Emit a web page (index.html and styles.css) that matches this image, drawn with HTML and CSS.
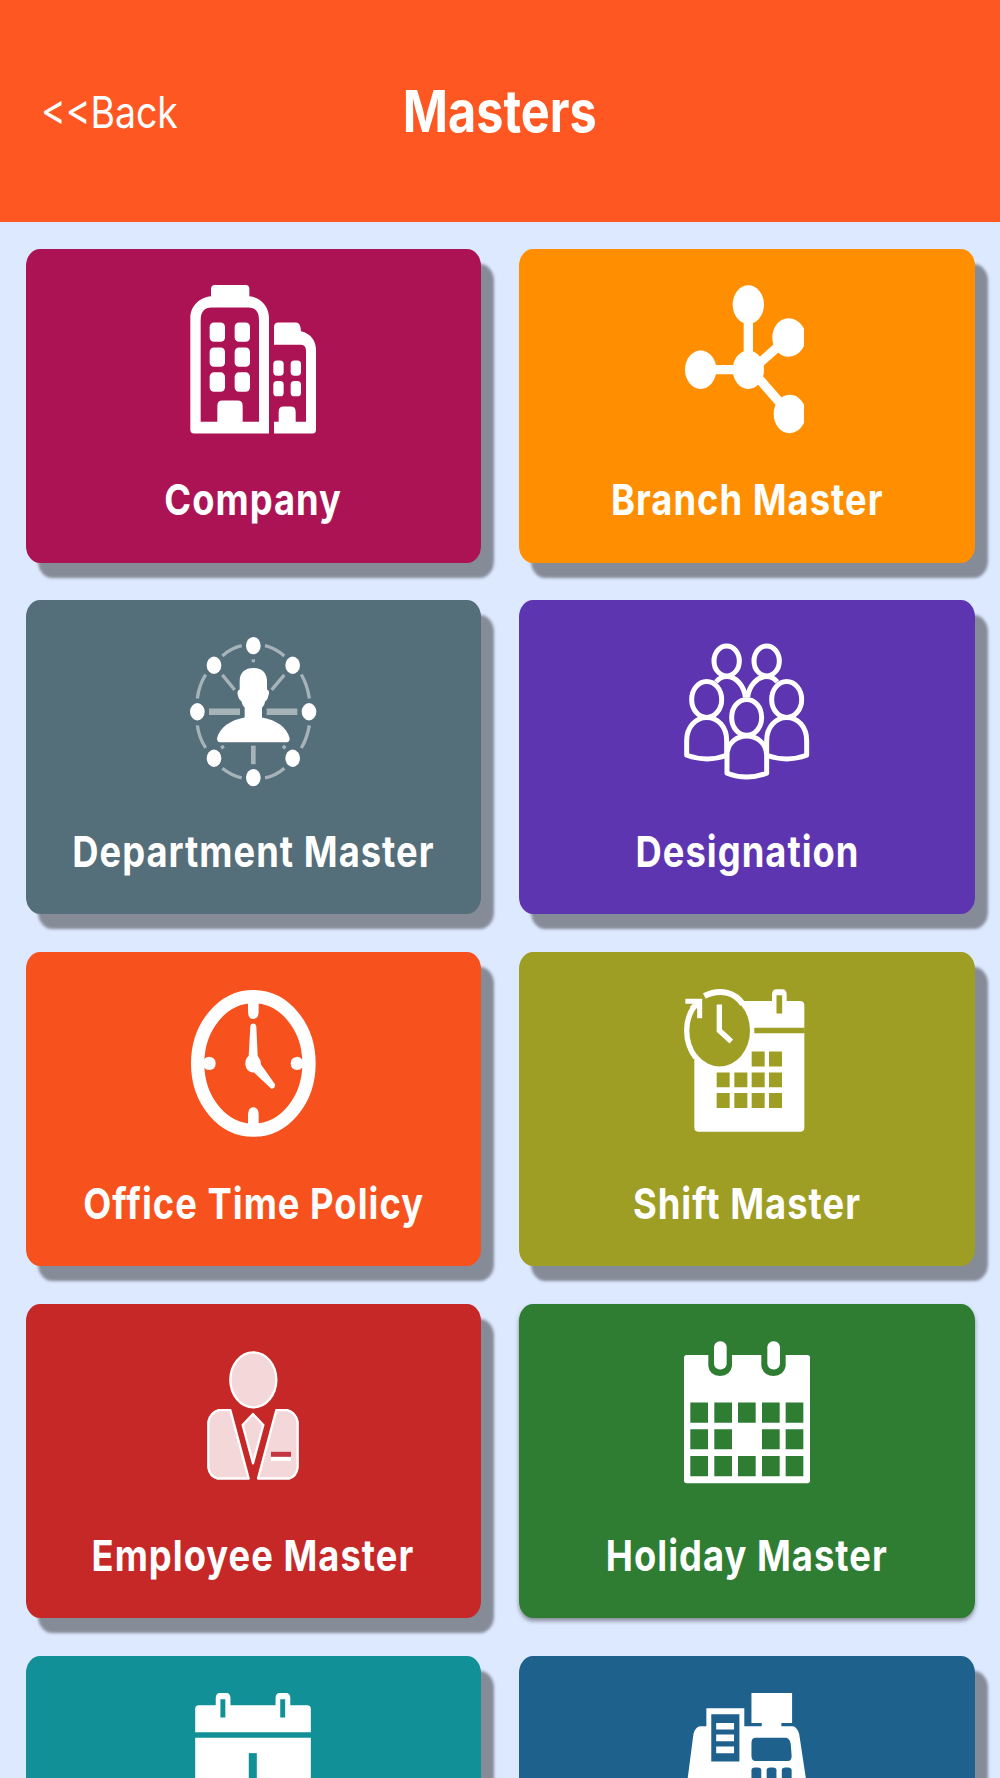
FILE: index.html
```html
<!DOCTYPE html>
<html lang="en">
<head>
<meta charset="utf-8">
<title>Masters</title>
<link rel="stylesheet" href="styles.css">
</head>
<body>
<div class="screen">
<header class="header">
  <a class="back">&lt;&lt;Back</a>
  <h1 class="title">Masters</h1>
</header>
<main class="grid">
  <section class="card company">
    <svg class="icon" viewBox="60 74 378 447" preserveAspectRatio="none">
      <path fill="#fff" fill-rule="evenodd" d="M123 108V86Q123 74 135 74H227Q238 74 238 86V108C272 111 297 139 297 173V521H72Q61 521 61 510V173C61 139 88 111 123 108ZM92 180V486H142V438Q142 422 157 422H203Q218 422 218 438V486H267V180Q267 142 235 142H125Q92 142 92 180Z"/>
      <g fill="#fff"><rect x="119" y="187" width="46" height="58" rx="13"/><rect x="194" y="187" width="46" height="58" rx="13"/><rect x="119" y="262" width="46" height="58" rx="13"/><rect x="194" y="262" width="46" height="58" rx="13"/><rect x="119" y="337" width="46" height="58" rx="13"/><rect x="194" y="337" width="46" height="58" rx="13"/>
      <path d="M312 254V201Q312 187 325 187H378Q392 187 393 213C423 220 438 242 438 271V510Q438 521 428 521H312V486H326V456Q326 440 340 440H363Q377 440 377 456V486H408V272Q408 254 391 254Z"/>
      <rect x="310" y="301" width="31" height="46" rx="11"/><rect x="362" y="301" width="31" height="46" rx="11"/><rect x="310" y="363" width="31" height="46" rx="11"/><rect x="362" y="363" width="31" height="46" rx="11"/></g>
    </svg>
    <h2 class="label">Company</h2>
  </section>
  <section class="card branch">
    <svg class="icon" viewBox="72 74 378 447" preserveAspectRatio="none">
      <path d="M265 133V329M123 329H265" fill="none" stroke="#fff" stroke-width="28"/>
      <path d="M265 339L385 232M265 319L389 462" fill="none" stroke="#fff" stroke-width="28"/>
      <g fill="#fff"><ellipse cx="265" cy="133" rx="47" ry="58"/><ellipse cx="122" cy="329" rx="47" ry="58"/><ellipse cx="265" cy="329" rx="47" ry="58"/><path d="M432 205C423 187 406 174 385 174C358 174 337 200 337 232S358 290 385 290C405 290 423 277 432 257ZM432 434C423 416 409 404 389 404C362 404 341 430 341 462S362 520 389 520C409 520 423 507 432 489Z"/></g>
    </svg>
    <h2 class="label">Branch Master</h2>
  </section>
  <section class="card department">
    <svg class="icon" viewBox="60 49 378 447" preserveAspectRatio="none">
      <g fill="none" stroke="#a6b3b9" stroke-width="10">
        <path d="M157 106Q184 82 215 75M285 75Q317 83 343 106M394 162Q412 193 418 234M418 315Q412 352 394 383M343 444Q317 467 285 473M215 473Q184 466 157 444M107 383Q87 352 82 315M82 234Q87 193 107 162"/>
        <path d="M157 163L194 208M343 163L305 208M250 116V125M153 383L162 378M338 378L347 383"/>
        <path d="M250 376V432" stroke-width="14"/>
        <path d="M117 274H210M290 274H382" stroke-width="20"/>
      </g>
      <g fill="#fff"><ellipse cx="250" cy="75" rx="22" ry="26"/><ellipse cx="368" cy="134" rx="22" ry="26"/><ellipse cx="417" cy="274" rx="22" ry="26"/><ellipse cx="368" cy="414" rx="22" ry="26"/><ellipse cx="250" cy="472" rx="22" ry="26"/><ellipse cx="132" cy="414" rx="22" ry="26"/><ellipse cx="82" cy="274" rx="22" ry="26"/><ellipse cx="132" cy="134" rx="22" ry="26"/>
      <path d="M250 142C276 142 290 156 291 180V207Q301 210 295 226Q292 240 286 242Q284 254 276 262V291C320 299 352 321 359 354Q359 366 350 366H150Q141 366 141 354C149 321 180 299 224 291V262Q216 254 214 242Q207 239 204 226Q199 210 209 207V180C210 156 224 142 250 142Z"/></g>
    </svg>
    <h2 class="label">Department Master</h2>
  </section>
  <section class="card designation">
    <svg class="icon" viewBox="72 49 378 447" preserveAspectRatio="none">
      <g fill="none" stroke="#fff" stroke-width="15" stroke-linejoin="round">
        <ellipse cx="200" cy="121" rx="38" ry="45"/><ellipse cx="320" cy="121" rx="38" ry="45"/>
        <path d="M168 184Q182 168 200 168C228 168 252 195 256 230M352 184Q338 168 320 168C292 168 267 195 263 230"/>
        <ellipse cx="140" cy="237" rx="45" ry="54"/><ellipse cx="380" cy="237" rx="45" ry="54"/>
        <path d="M80 405V360C80 322 106 291 140 291C176 291 200 322 200 360V405Q143 427 80 405ZM320 405V360C320 322 346 291 380 291C416 291 440 322 440 360V405Q380 427 320 405Z"/>
      </g>
      <g fill="#5e35b1" stroke="#fff" stroke-width="15" stroke-linejoin="round"><path d="M201 459V405C201 370 229 347 260 347S320 370 320 405V459Q260 482 201 459Z"/><ellipse cx="260" cy="291" rx="45" ry="54"/></g>
    </svg>
    <h2 class="label">Designation</h2>
  </section>
  <section class="card office">
    <svg class="icon" viewBox="60 55 378 447" preserveAspectRatio="none">
      <ellipse cx="250" cy="279" rx="167" ry="201" fill="none" stroke="#fff" stroke-width="40"/>
      <g fill="#fff"><path d="M234 90H266V126Q265 145 250 145T234 126ZM234 465H266V433Q265 411 250 411T234 433ZM90 267H103Q107 259 118 259Q137 261 137 279T118 299Q107 299 103 292H90ZM410 267H396Q392 259 382 259Q362 261 362 279T382 299Q392 299 396 292H410Z"/>
      <path d="M241 168Q242 159 250 159T259 168L263 256Q272 266 273 282L315 342Q316 355 304 355L252 306C237 307 226 295 226 279Q226 264 236 257Z"/></g>
    </svg>
    <h2 class="label">Office Time Policy</h2>
  </section>
  <section class="card shift">
    <svg class="icon" viewBox="72 55 378 447" preserveAspectRatio="none">
      <path fill="#fff" d="M235 91H336V72Q336 56 350 56H366Q380 56 380 72V91H420Q433 91 433 104V472Q433 485 420 485H117Q103 485 103 472V260Z"/>
      <ellipse cx="179" cy="180" rx="91" ry="108" fill="#9e9d24"/>
      <g fill="none"><path d="M133 76C184 50 228 69 249 101" stroke="#fff" stroke-width="18"/><path d="M105 104C72 146 71 214 107 262" stroke="#fff" stroke-width="16"/>
      <path d="M76 92H119V143" stroke="#fff" stroke-width="15"/><path d="M95 115L119 94" stroke="#fff" stroke-width="17"/>
      <path d="M178 102V180L214 213" stroke="#fff" stroke-width="16"/>
      <path d="M283 180H434M358 74V129" stroke="#9e9d24" stroke-width="17"/></g>
      <path fill="#9e9d24" d="M275 243h39v45h-39zM327 243h39v45h-39zM170 306h39v45h-39zM223 306h39v45h-39zM275 306h39v45h-39zM327 306h39v45h-39zM170 368h39v45h-39zM223 368h39v45h-39zM275 368h39v45h-39zM327 368h39v45h-39z"/>
    </svg>
    <h2 class="label">Shift Master</h2>
  </section>
  <section class="card employee">
    <svg class="icon" viewBox="60 30 378 447" preserveAspectRatio="none">
      <g fill="#f4d7d8" stroke="#fff" stroke-width="7" stroke-linejoin="round">
        <ellipse cx="250" cy="147" rx="69" ry="83"/>
        <path d="M146 238H181L236 444H143Q119 438 115 411V273Q121 245 146 238ZM319 238H352Q377 245 383 273V411Q379 438 357 444H264Z"/>
        <path d="M249 250L280 283L249 398L218 283Z"/>
      </g>
      <path d="M303 385H363" stroke="#fff" stroke-width="12"/><path d="M303 371H363" stroke="#c33742" stroke-width="15"/>
    </svg>
    <h2 class="label">Employee Master</h2>
  </section>
  <section class="card holiday">
    <svg class="icon" viewBox="72 61 378 447" preserveAspectRatio="none">
      <rect x="72" y="103" width="378" height="386" rx="8" fill="#fff"/>
      <path fill="#2e7d32" d="M145 98H216V137Q211 166 180 166T145 137ZM304 98H377V137Q371 166 341 166T304 137Z"/>
      <g fill="#fff"><rect x="162" y="62" width="38" height="85" rx="18"/><rect x="322" y="62" width="38" height="85" rx="18"/></g>
      <path fill="#2e7d32" d="M91 246h53v61h-53zM163 246h53v61h-53zM234 246h53v61h-53zM306 246h53v61h-53zM377 246h53v61h-53zM91 327h53v60h-53zM163 327h53v60h-53zM306 327h53v60h-53zM377 327h53v60h-53zM91 407h53v61h-53zM163 407h53v61h-53zM234 407h53v61h-53zM306 407h53v61h-53zM377 407h53v61h-53z"/>
    </svg>
    <h2 class="label">Holiday Master</h2>
  </section>
  <section class="card schedule">
    <svg class="icon" viewBox="121 156 378 447" preserveAspectRatio="none">
      <g transform="scale(1.3393 1)">
        <path fill="#fff" d="M102 274V204Q102 193 110 193H148V170Q149 156 157 156H172Q180 156 181 170V193H282V170Q283 156 291 156H306Q314 156 315 170V193H353Q361 193 361 204V274ZM102 291H361V590H102Z"/>
        <path d="M164 175V230M298 175V230" stroke="#129097" stroke-width="11"/><path d="M231 337V480" stroke="#129097" stroke-width="18"/>
      </g>
    </svg>
  </section>
  <section class="card register">
    <svg class="icon" viewBox="1603 156 378 447" preserveAspectRatio="none">
      <g transform="scale(1.3393 1)">
        <path fill="#fff" d="M1348 156H1439V246H1415V256H1440Q1450 257 1455 280L1470 414V590H1205V414L1218 280Q1222 257 1234 256H1247V202H1332V256H1371V246H1348Z"/>
        <path fill="#1f618d" d="M1258 220H1321V362H1258ZM1356 291H1426Q1434 293 1436 310L1438 346Q1438 361 1430 361H1356Q1348 359 1348 344V308Q1348 292 1356 291Z"/>
        <path d="M1269 256H1309M1269 291H1309M1269 327H1309" stroke="#fff" stroke-width="20"/>
        <g fill="#1f618d"><rect x="1348" y="380" width="22" height="50" rx="8"/><rect x="1382" y="380" width="22" height="50" rx="8"/><rect x="1416" y="380" width="22" height="50" rx="8"/></g>
      </g>
    </svg>
  </section>
</main>
</div>
</body>
</html>
```
FILE: styles.css
```css
* { box-sizing: border-box; }
body { margin: 0; font-family: Inter, "Liberation Sans", sans-serif; color: #fff; }
.screen { height: 1778px; overflow: hidden; background: #dde9ff; }
.header {
  height: 222px;
  background: #ff5722;
  display: grid;
  grid-template-columns: 1fr auto 1fr;
  align-items: start;
  padding: 75px 41px 0;
}
.back { font-size: 43.5px; line-height: 74px; transform: scaleX(.86); transform-origin: left; white-space: nowrap; }
.title { margin: 0; font-size: 58px; line-height: 72px; font-weight: 700; transform: scaleX(.838); }
.grid {
  display: grid;
  grid-template-columns: 455.5px 455.5px;
  grid-auto-rows: 314px;
  gap: 37.9px 38.3px;
  padding: 26.6px 25.5px 0;
}
.card {
  display: flex;
  flex-direction: column;
  align-items: center;
  padding-top: 36.6px;
  border-radius: 14px / 17px;
  box-shadow: 12.5px 15px 3px #868b98;
}
.icon { width: 126px; height: 148.5px; flex: none; overflow: visible; }
.label {
  margin: 41.4px 0 0;
  font-size: 43px;
  line-height: 48px;
  font-weight: 700;
  letter-spacing: 1.2px;
  white-space: nowrap;
  transform: scaleX(.845);
}
.company { background: #ab1354; }
.branch { background: #ff8f00; }
.department { background: #546e7a; }
.designation { background: #5e35b1; }
.office { background: #f7511e; }
.shift { background: #9e9d24; }
.employee { background: #c62828; }
.holiday { background: #2e7d32; box-shadow: 0 3px 4px #868b98; }
.schedule { background: #129097; }
.register { background: #1f618d; }
```
